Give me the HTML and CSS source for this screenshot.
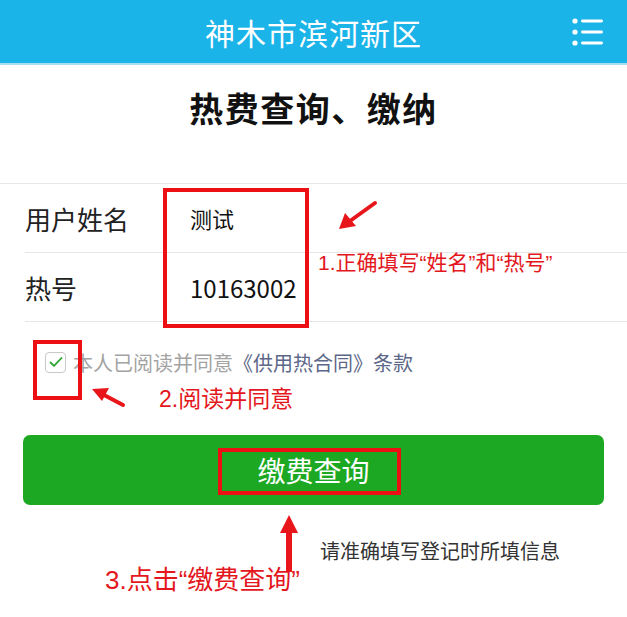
FILE: index.html
```html
<!DOCTYPE html>
<html lang="zh-CN">
  <head>
    <meta charset="UTF-8" />
    <meta name="viewport" content="width=device-width, initial-scale=1" />
    <title>神木市滨河新区</title>
    <link rel="stylesheet" href="styles.css">
  </head>
  <body>
    <div class="page">
      <header class="topbar">
        <span class="topbar-title">神木市滨河新区</span>
        <svg class="menu-icon" width="32" height="30" viewBox="0 0 32 30">
          <circle cx="3" cy="4" r="2.6" fill="#fff" />
          <circle cx="3" cy="15" r="2.6" fill="#fff" />
          <circle cx="3" cy="26" r="2.6" fill="#fff" />
          <rect x="9" y="2.6" width="22" height="2.8" rx="1.4" fill="#fff" />
          <rect x="9" y="13.6" width="22" height="2.8" rx="1.4" fill="#fff" />
          <rect x="9" y="24.6" width="22" height="2.8" rx="1.4" fill="#fff" />
        </svg>
      </header>

      <h1 class="page-title">热费查询、缴纳</h1>

      <!-- 表单 -->
      <div class="form">
        <div class="form-row">
          <span class="form-label">用户姓名</span>
          <span class="form-value name">测试</span>
        </div>
        <div class="form-row">
          <span class="form-label">热号</span>
          <span class="form-value">10163002</span>
        </div>
      </div>

      <div class="agree">
        <span class="checkbox">
          <svg width="14" height="12" viewBox="0 0 14 12">
            <path d="M1.5 6.5 L5 9.8 L12.5 2" fill="none" stroke="#2aa52f" stroke-width="1.8" stroke-linecap="round" stroke-linejoin="round" />
          </svg>
        </span>
        <span>本人已阅读并同意</span><span class="contract">《供用热合同》条款</span>
      </div>

      <button class="query-btn">缴费查询</button>

      <p class="tip">请准确填写登记时所填信息</p>
      <p class="note note-3">3.点击“缴费查询”</p>

      <!-- 标注 -->
      <div class="mark mark-form"></div>
      <div class="mark mark-check"></div>
      <div class="mark mark-btn"></div>
      <p class="note note-1">1.正确填写“姓名”和“热号”</p>
      <p class="note note-2">2.阅读并同意</p>
      <svg class="arrows" width="627" height="617" viewBox="0 0 627 617">
        <line x1="375" y1="203" x2="350" y2="221" stroke="#e8161b" stroke-width="4" stroke-linecap="round" />
        <polygon points="339,229 345,213 356,226" fill="#e8161b" />
        <line x1="123" y1="405" x2="104" y2="395" stroke="#e8161b" stroke-width="4" stroke-linecap="round" />
        <polygon points="92,389 109,388 102,401" fill="#e8161b" />
        <rect x="286" y="530" width="6" height="42" fill="#e8161b" />
        <polygon points="289,515 280,533 298,533" fill="#e8161b" />
      </svg>
    </div>
  </body>
</html>
```

FILE: styles.css
```css
body {
  margin: 0;
  font-family: "Noto Sans CJK SC", "Noto Sans", sans-serif;
  background: #fff;
}

.page {
  position: relative;
  width: 627px;
  height: 617px;
  overflow: hidden;
}

.topbar {
  height: 63px;
  background-color: #1bb4e9;
  border-bottom: 2px solid #a3def3;
  display: flex;
  align-items: center;
  justify-content: center;
  position: relative;
}

.topbar-title {
  color: #fff;
  font-size: 30px;
  letter-spacing: 1px;
}

.menu-icon {
  position: absolute;
  right: 23px;
  top: 17px;
}

.page-title {
  margin: 0;
  padding: 21px 0 0;
  height: 118px;
  box-sizing: border-box;
  text-align: center;
  font-size: 34px;
  line-height: 44px;
  font-weight: bold;
  color: #111;
  letter-spacing: 1.5px;
}

.form {
  border-top: 1px solid #e6e6e6;
}

.form-row {
  display: flex;
  align-items: center;
  height: 68px;
  margin-left: 25px;
  border-bottom: 1px solid #e6e6e6;
}

.form-label {
  width: 165px;
  font-size: 26px;
  color: #222;
}

.form-value {
  font-size: 24px;
  color: #111;
}

.form-value.name {
  font-size: 22px;
}

.agree {
  display: flex;
  align-items: center;
  margin: 29px 0 0 45px;
  height: 22px;
  font-size: 20px;
  color: #a3a3a3;
}

.checkbox {
  width: 19px;
  height: 19px;
  border: 1px solid #c9c9c9;
  border-radius: 4px;
  display: flex;
  align-items: center;
  justify-content: center;
  margin-right: 7px;
}

.contract {
  color: #5d6788;
}

.query-btn {
  display: block;
  margin: 62px 23px 0;
  width: 581px;
  height: 70px;
  border: none;
  border-radius: 7px;
  background-color: #1ca822;
  color: #fff;
  font-family: inherit;
  font-size: 28px;
}

.tip {
  margin: 33px 0 0 320px;
  font-size: 20px;
  line-height: 26px;
  color: #333;
}

.note {
  margin: 0;
  color: #e3171d;
  font-family: "Liberation Sans", "Noto Sans CJK SC", sans-serif;
}

.note-3 {
  margin: 0 0 0 105px;
  font-size: 26px;
  line-height: 32px;
}

.note-1 {
  position: absolute;
  left: 318px;
  top: 250px;
  font-size: 21px;
  line-height: 26px;
}

.note-2 {
  position: absolute;
  left: 159px;
  top: 385px;
  font-size: 23px;
  line-height: 28px;
}

/* 红色标注框 */
.mark {
  position: absolute;
  box-sizing: border-box;
  border: 4px solid #ec0f14;
}

.mark-form {
  left: 163px;
  top: 188px;
  width: 146px;
  height: 140px;
}

.mark-check {
  left: 33px;
  top: 340px;
  width: 49px;
  height: 60px;
}

.mark-btn {
  left: 218px;
  top: 448px;
  width: 183px;
  height: 47px;
}

.arrows {
  position: absolute;
  left: 0;
  top: 0;
  pointer-events: none;
}
```
